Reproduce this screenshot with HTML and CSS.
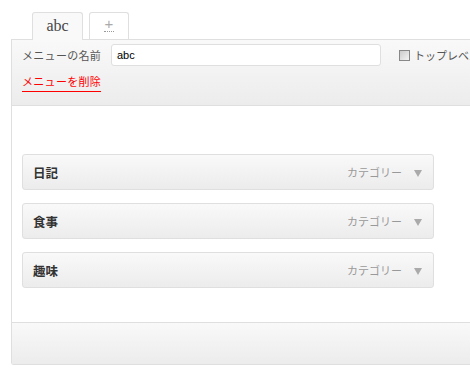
FILE: index.html
```html
<!DOCTYPE html>
<html lang="ja">
<head>
    <meta charset="UTF-8">
    <title>メニュー</title>
    <link rel="stylesheet" href="styles.css">
</head>
<body>
    <div class="menu-editor">
        <div class="tabs">
            <div class="tab tab-active">abc</div>
            <div class="tab tab-add"><span class="plus">+</span></div>
        </div>

        <div class="menu-box">
            <div class="menu-header">
                <div class="name-row">
                    <label for="menuName" class="name-label">メニューの名前</label>
                    <input type="text" id="menuName" class="name-input" value="abc">
                    <label class="top-level">
                        <span class="checkbox"></span>
                        <span>トップレベル</span>
                    </label>
                </div>
                <a href="#" class="delete-link">メニューを削除</a>
            </div>

            <div class="menu-body">
                <div class="menu-item">
                    <span class="item-title">日記</span>
                    <span class="item-type">カテゴリー</span>
                    <span class="item-arrow"></span>
                </div>
                <div class="menu-item">
                    <span class="item-title">食事</span>
                    <span class="item-type">カテゴリー</span>
                    <span class="item-arrow"></span>
                </div>
                <div class="menu-item">
                    <span class="item-title">趣味</span>
                    <span class="item-type">カテゴリー</span>
                    <span class="item-arrow"></span>
                </div>
            </div>

            <div class="menu-footer"></div>
        </div>
    </div>
</body>
</html>
```

FILE: styles.css
```css
* {
    margin: 0;
    padding: 0;
    box-sizing: border-box;
}

body {
    font-family: "Liberation Sans", "Noto Sans CJK JP", sans-serif;
    font-size: 11px;
    color: #333;
    background: #fff;
    overflow: hidden;
}

.menu-editor {
    width: 500px;
    padding: 12px 0 0 11px;
}

.tabs {
    display: flex;
    gap: 6px;
    padding-left: 21px;
    height: 28px;
    position: relative;
    z-index: 1;
}

.tab {
    border: 1px solid #dfdfdf;
    border-bottom: none;
    border-radius: 3px 3px 0 0;
    text-align: center;
}

.tab-active {
    width: 51px;
    height: 28px;
    background: #f9f9f9;
    font-family: "Liberation Serif", serif;
    font-size: 16px;
    color: #464646;
    line-height: 26px;
}

.tab-add {
    width: 40px;
    height: 27px;
    background: #fff;
}

.plus {
    display: inline-block;
    margin-top: 4px;
    color: #aaa;
    font-size: 15px;
    line-height: 13px;
    border-bottom: 1px dotted #999;
    width: 10px;
    padding-bottom: 1px;
}

.menu-box {
    margin-top: -1px;
    border: 1px solid #dfdfdf;
    border-right: none;
    border-radius: 0 0 0 3px;
}

.menu-header {
    background: linear-gradient(#f9f9f9, #ececec);
    border-bottom: 1px solid #dfdfdf;
    padding: 4px 0 11px 10px;
    height: 66px;
}

.name-row {
    display: flex;
    align-items: center;
    height: 22px;
}

.name-label {
    width: 89px;
    color: #555;
    letter-spacing: 0.3px;
}

.name-input {
    width: 270px;
    height: 22px;
    border: 1px solid #dfdfdf;
    border-radius: 3px;
    padding: 0 5px;
    font-family: "Liberation Sans", sans-serif;
    font-size: 11px;
    color: #000;
    background: #fff;
}

.top-level {
    display: flex;
    align-items: center;
    gap: 4px;
    margin-left: 18px;
    color: #555;
    white-space: nowrap;
}

.checkbox {
    width: 11px;
    height: 11px;
    border: 1px solid #888;
    background: linear-gradient(135deg, #ccc, #f4f4f4);
}

.delete-link {
    display: inline-block;
    margin-top: 9px;
    color: #f00;
    text-decoration: none;
    padding-bottom: 2px;
    border-bottom: 1px solid #f00;
    letter-spacing: 0.3px;
    line-height: 14px;
}

.menu-body {
    background: #fff;
    padding: 48px 0 34px 10px;
    display: flex;
    flex-direction: column;
    gap: 13px;
}

.menu-item {
    width: 412px;
    height: 36px;
    border: 1px solid #dfdfdf;
    border-radius: 3px;
    background: linear-gradient(#f9f9f9, #ececec);
    display: flex;
    align-items: center;
    padding: 0 11px 0 10px;
}

.item-title {
    flex: 1;
    font-size: 12.5px;
    font-weight: bold;
    color: #333;
}

.item-type {
    color: #999;
    font-size: 11px;
}

.item-arrow {
    margin-left: 12px;
    width: 0;
    height: 0;
    border-left: 4px solid transparent;
    border-right: 4px solid transparent;
    border-top: 7px solid #aaa;
    margin-top: 3px;
}

.menu-footer {
    height: 42px;
    border-top: 1px solid #dfdfdf;
    background: linear-gradient(#f9f9f9, #ececec);
}
```
